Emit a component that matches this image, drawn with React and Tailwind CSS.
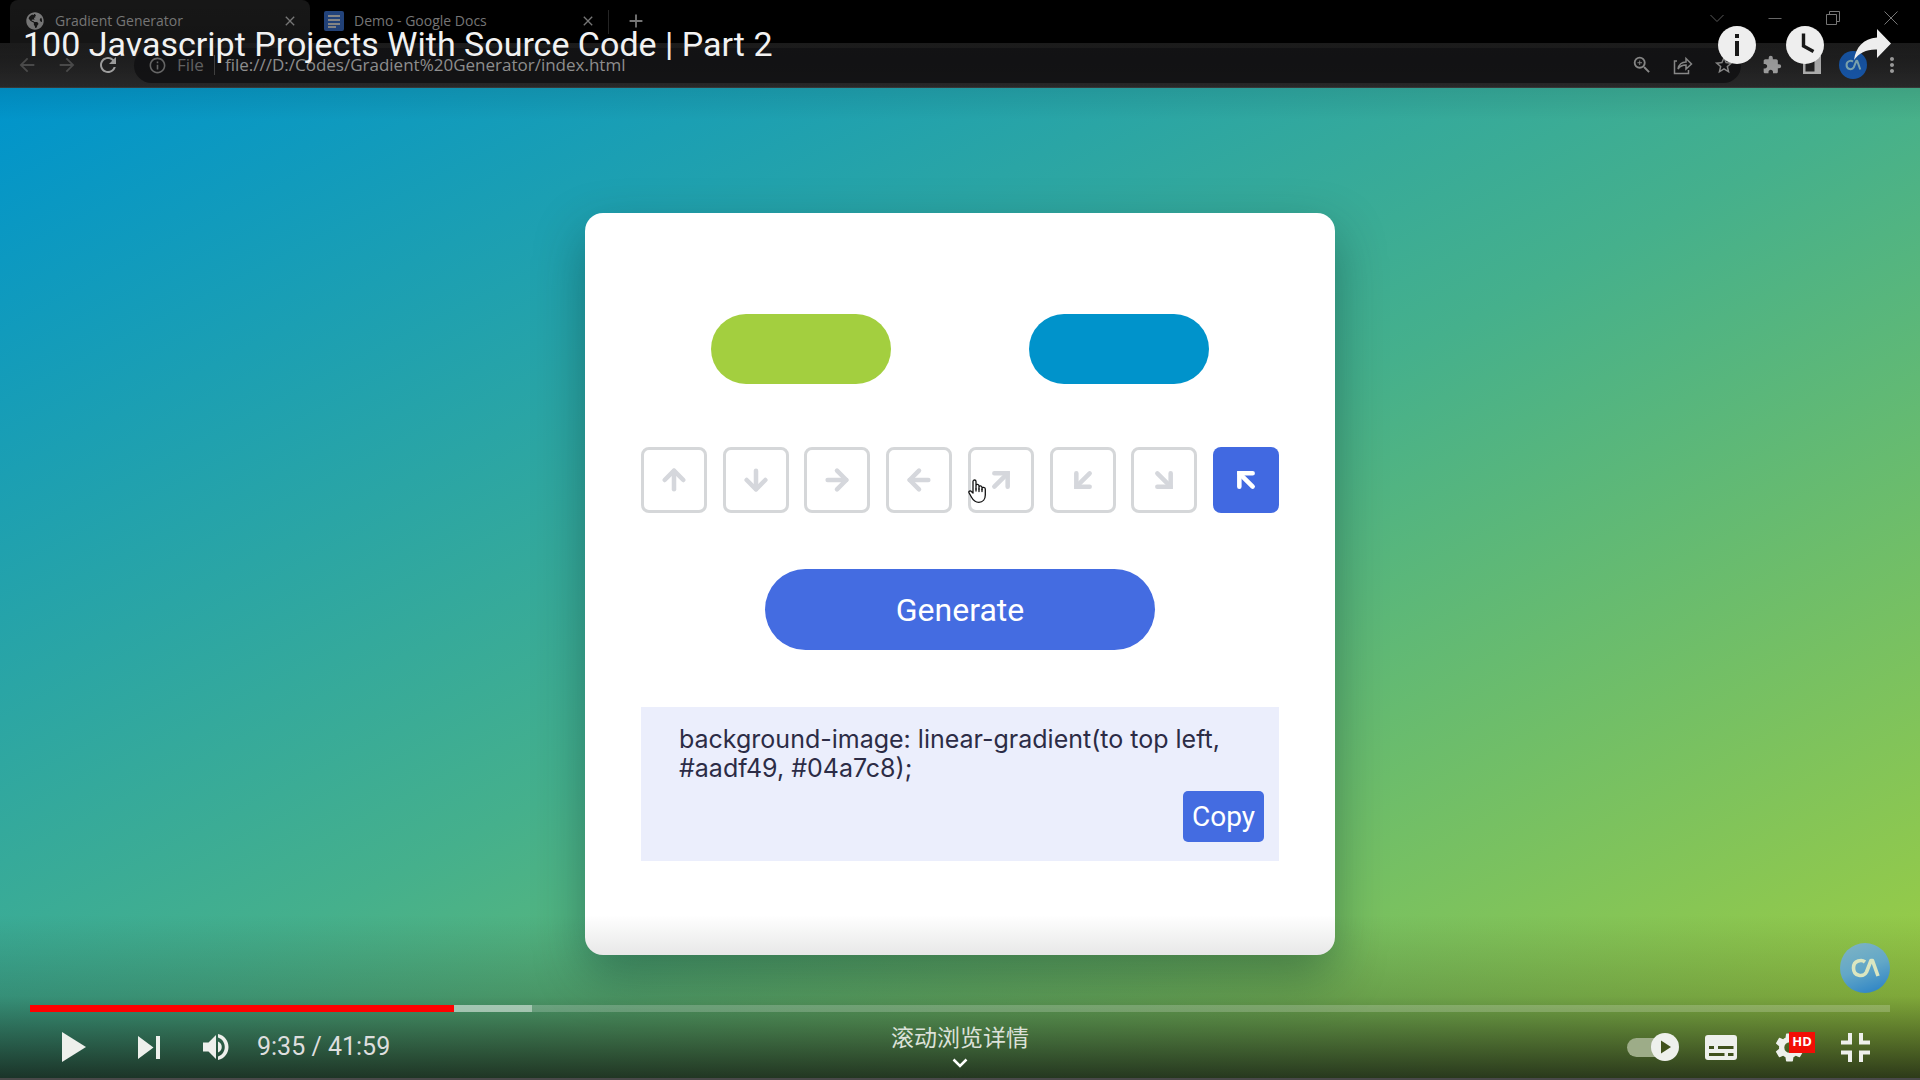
import React from "react";
import { ArrowUp, ArrowDown, ArrowRight, ArrowLeft, ArrowUpRight, ArrowDownLeft, ArrowDownRight, ArrowUpLeft } from "lucide-react";
import { MdClose, MdAdd, MdArrowBack, MdArrowForward, MdRefresh, MdInfoOutline, MdZoomIn, MdStarOutline, MdExtension, MdMoreVert } from "react-icons/md";
import { FaGlobeAmericas } from "react-icons/fa";

const directions = [
  ["to top", ArrowUp], ["to bottom", ArrowDown], ["to right", ArrowRight], ["to left", ArrowLeft],
  ["to top right", ArrowUpRight], ["to bottom left", ArrowDownLeft], ["to bottom right", ArrowDownRight], ["to top left", ArrowUpLeft],
];

function Monogram({ className }) {
  return (
    <svg viewBox="0 0 50 50" className={className} fill="none" stroke="currentColor" strokeWidth="3.6">
      <path d="M25 19C22 16.5 13.500 17 13.500 25c0 8.500 10 9.500 13 4L31 17.500h1.500L38 33" strokeLinejoin="round" />
    </svg>
  );
}

function TabStrip() {
  return (
    <div className="flex h-[43px] bg-black pl-[10px] text-[#7c7c7c]">
      <div className="flex w-[300px] items-center rounded-t-lg bg-[#171717] pl-4 pr-3 pb-0.5">
        <FaGlobeAmericas className="size-[18px]" />
        <span className="ml-[11px] flex-1 text-sm">Gradient Generator</span>
        <button aria-label="Close tab"><MdClose className="size-4" /></button>
      </div>
      <div className="flex w-[298px] items-center pl-3.5 pr-3 pb-0.5">
        <svg viewBox="0 0 20 20" className="size-5"><rect width="20" height="20" rx="2" fill="#23457f" /><path d="M4 5h12M4 9h12M4 13h12M4 16h8" stroke="#8b8b8b" strokeWidth="1.800" /></svg>
        <span className="ml-2.5 flex-1 text-sm">Demo - Google Docs</span>
        <button aria-label="Close tab"><MdClose className="size-4" /></button>
      </div>
      <div className="mt-2.5 h-6 w-px bg-[#262626]" />
      <button aria-label="New tab" className="ml-4 pb-0.5"><MdAdd className="size-[22px]" /></button>
      <div className="mb-2 ml-auto flex items-center gap-[44px] pr-[22px]">
        <svg viewBox="0 0 14 14" className="size-3.5" fill="none" stroke="#5c5c5c"><path d="M.5 4l6.500 6.500L13.500 4" /></svg>
        <svg viewBox="0 0 14 14" className="size-3.5" fill="none" stroke="#6c6c6c"><path d="M.5 7.500h13" /></svg>
        <svg viewBox="0 0 14 14" className="size-3.5" fill="none" stroke="#7c7c7c"><path d="M.5 3.500h10v10h-10zM3.500 3.500v-3h10v10h-3" /></svg>
        <svg viewBox="0 0 14 14" className="size-3.5" fill="none" stroke="#7c7c7c"><path d="M.5.5l13 13M13.500.5l-13 13" /></svg>
      </div>
    </div>
  );
}

function Toolbar() {
  return (
    <div className="flex h-[45px] items-center border-b border-[#3c3c3c] bg-linear-to-b from-[#1e1e1e] to-[#2b2b2c] pl-4 pr-4 text-[#9a9a9a]">
      <MdArrowBack className="size-[22px] text-[#555]" />
      <MdArrowForward className="ml-[18px] size-[22px] text-[#555]" />
      <MdRefresh className="ml-[18px] size-6 text-[#b4b4b4]" />
      <div className="ml-3.5 flex h-[35px] flex-1 items-center rounded-full bg-[#151517] pl-3.5 pr-1.5">
        <MdInfoOutline className="size-[19px] text-[#757575]" />
        <span className="ml-2.5 text-[17px] text-[#707070]">File</span>
        <span className="mx-2.5 h-5 w-px bg-[#484848]" />
        <span className="flex-1 text-[17px] text-[#a3a3a3]">file:///D:/Codes/Gradient%20Generator/index.html</span>
        <MdZoomIn className="size-[22px]" />
        <svg viewBox="0 0 20 20" className="ml-5 size-5" fill="none" stroke="currentColor" strokeWidth="1.500"><path d="M4 6H1.500v12.500h14V15M5 14c1-5 4-7 8-7V3.500l5.500 5.500-5.500 5v-4c-4 0-6 1-8 4z" /></svg>
        <MdStarOutline className="ml-5 size-[22px]" />
      </div>
      <MdExtension className="ml-[21px] size-5 text-[#b0b0b0]" />
      <svg viewBox="0 0 18 18" className="ml-[21px] size-[18px]"><path d="M0 0h18v18H0zM2.500 2.500v13h9v-13z" fill="#c0c0c0" fillRule="evenodd" /></svg>
      <span className="ml-[18px] flex size-7 items-center justify-center rounded-full bg-[#195db5] text-[#8dbac6]"><Monogram className="size-7" /></span>
      <MdMoreVert className="ml-[13px] size-6 text-[#b0b0b0]" />
    </div>
  );
}

function HandCursor() {
  return (
    <svg viewBox="0 0 19 24" className="absolute left-0 top-8 h-6 w-[19px]" fill="#fff" stroke="#111" strokeWidth="1.300" strokeLinejoin="round" strokeLinecap="round">
      <path d="M5 14V2.500C5 .5 8 .5 8 2.500V10 6.500c0-1.500 3-1.500 3 .5v3-2c0-1.500 3-1.500 3 .5v2-1c0-1.500 3.300-1.500 3.300.5v6c0 4-2.300 7.300-6.500 7.300-3.800 0-5.800-2.300-7.300-5L1 13.800c-.8-1.500 1.300-2.600 2.400-1.300z" />
      <path d="M11 10v2.500M14 10.500v2M8 10v2" fill="none" />
    </svg>
  );
}

function GradientCard() {
  return (
    <section className="w-[750px] rounded-[18px] bg-white px-14 pb-[94px] pt-[101px] shadow-[0_20px_50px_rgba(0,40,40,0.38)]">
      <div className="flex justify-between px-[70px]">
        <button aria-label="First color" className="h-[70px] w-[180px] rounded-full bg-[#a3cf3f]" />
        <button aria-label="Second color" className="h-[70px] w-[180px] rounded-full bg-[#0093cb]" />
      </div>
      <div className="mt-[63px] flex justify-between">
        {directions.map(([name, Icon], i) => (
          <div key={name} className="relative">
            <button aria-label={name} className={i === 7 ? "flex size-[66px] items-center justify-center rounded-lg bg-[#4169e1] text-white" : "flex size-[66px] items-center justify-center rounded-lg border-3 border-[#d5d7d9] text-[#d5d7dc]"}>
              <Icon className="size-8" strokeWidth={3.4} strokeLinejoin={i > 3 ? "miter" : "round"} />
            </button>
            {i === 4 && <HandCursor />}
          </div>
        ))}
      </div>
      <button className="mx-auto mt-14 flex h-[81px] w-[390px] items-center justify-center rounded-full bg-[#446ce1] font-[Roboto] text-[32px] text-white">Generate</button>
      <div className="mt-[57px] flex h-[154px] flex-col bg-[#ebeefc] pl-[38px] pr-[15px] pt-[18px] font-[Inter] text-[25px] text-[#2c2c46]">
        <p className="w-[560px] leading-[29px]">background-image: linear-gradient(to top left, #aadf49, #04a7c8);</p>
        <button className="ml-auto mt-2 h-[51px] w-[81px] rounded-[5px] bg-[#446ce1] font-[Roboto] text-[28px] text-white">Copy</button>
      </div>
    </section>
  );
}

function TopOverlay() {
  return (
    <header className="absolute inset-x-0 top-0 flex h-[120px] items-start bg-linear-to-b from-transparent via-black/15 to-transparent pl-[23px] pr-7 text-[#ececec]">
      <h1 className="mt-[25px] flex-1 font-[Roboto] text-[34px] leading-[38px] text-[#f2f2f2]">100 Javascript Projects With Source Code | Part 2</h1>
      <div className="mt-[26px] flex items-start">
        <button aria-label="Info"><svg viewBox="0 0 38 38" className="size-[38px]"><circle cx="19" cy="19" r="19" fill="#eee" /><path d="M17 8h4v4h-4zM17 15h4v15h-4z" fill="#181818" /></svg></button>
        <button aria-label="Watch later" className="ml-[30px]"><svg viewBox="0 0 38 38" className="size-[38px]"><circle cx="19" cy="19" r="19" fill="#eee" /><path d="M17.500 7.500V20l10 5.500" stroke="#181818" strokeWidth="3.400" fill="none" /></svg></button>
        <button aria-label="Share" className="ml-[28px] mt-[3px]"><svg viewBox="0 0 40 32" className="h-8 w-10"><path d="M25 0l14 14.500L25 29v-8.500C15 20 7 24 2 31 4 18 11 10 25 8.500z" fill="#eee" /></svg></button>
      </div>
    </header>
  );
}

function PlayerControls() {
  return (
    <footer className="absolute inset-x-0 bottom-0 border-b-2 border-[#494949] bg-linear-to-b from-transparent via-[#101510]/20 via-50% to-[#101510]/80 px-[30px] pt-[60px]">
      <div className="mb-3 flex justify-end">
        <span className="-mt-[32px] flex size-[50px] items-center justify-center rounded-full bg-linear-160 from-[#7fb4c4] via-[#62a7c7] to-[#217ec5] text-[#dbe6c0]"><Monogram className="size-[50px]" /></span>
      </div>
      <div role="progressbar" aria-label="Seek" aria-valuenow={575} aria-valuemax={2519} className="flex h-[7px] bg-white/20">
        <div className="w-[22.8%] bg-[#ff0000]" />
        <div className="w-[4.200%] bg-white/40" />
      </div>
      <div className="grid h-[66px] grid-cols-3 text-[#eef0ec]">
        <div className="flex items-center pl-8 pt-1">
          <button aria-label="Play"><svg viewBox="0 0 24 30" className="h-[30px] w-6" fill="currentColor"><path d="M0 0l24 15L0 30z" /></svg></button>
          <button aria-label="Next" className="ml-[52px]"><svg viewBox="0 0 22 23" className="h-[23px] w-[22px]" fill="currentColor"><path d="M0 0l15.500 11.500L0 23zM18 0h4v23h-4z" /></svg></button>
          <button aria-label="Mute" className="ml-[43px]"><svg viewBox="0 0 26 26" className="size-[26px]" fill="currentColor"><path d="M0 8.500h5.500L13 1v24l-7.500-7.500H0zM15 7.500c5 2 5 9 0 11zM15 0c14 3 14 23 0 26v-3.500c9-3 9-16 0-19z" /></svg></button>
          <span className="ml-7 font-[Roboto] text-[25px] text-[#dedede]">9:35 / 41:59</span>
        </div>
        <button className="flex flex-col items-center pt-1.5 font-['Noto_Sans_CJK_SC',sans-serif] text-[23px] leading-[36px] text-[#dce1d9]">
          滚动浏览详情
          <svg viewBox="0 0 16 10" className="mt-1 h-2.5 w-4" fill="none" stroke="#fff" strokeWidth="2.500"><path d="M1.500 1.500L8 8l6.500-6.500" /></svg>
        </button>
        <div className="flex items-center justify-end pr-5 pt-1">
          <button aria-label="Autoplay"><svg viewBox="0 0 52 28" className="h-7 w-[52px]"><rect y="5" width="44" height="19" rx="9.500" fill="#9dac88" /><circle cx="38" cy="14" r="14" fill="#eef0ec" /><path d="M34 7.500l10 6.500-10 6.500z" fill="#40511c" /></svg></button>
          <button aria-label="Subtitles" className="ml-[26px]"><svg viewBox="0 0 32 25" className="h-[25px] w-8"><rect width="32" height="25" rx="3" fill="#eef0ec" /><path d="M4 12.500h5M13 12.500h15.500M4 19.500h15.500M23 19.500h5.500" stroke="#40511c" strokeWidth="3" /></svg></button>
          <button aria-label="Settings" className="relative ml-[38px] w-[40px]">
            <svg viewBox="2 2 20 20" className="size-[29px]" fill="currentColor"><path d="M19.140 12.940c.04-.3.060-.61.060-.94s-.02-.64-.07-.94l2.030-1.580a.49.49 0 0 0 .12-.61l-1.920-3.320a.49.49 0 0 0-.59-.22l-2.390.96a7 7 0 0 0-1.620-.94l-.36-2.540A.48.48 0 0 0 13.920 2.400h-3.840a.48.48 0 0 0-.48.410l-.36 2.540a7 7 0 0 0-1.620.94l-2.390-.96a.49.49 0 0 0-.59.22L2.720 8.870a.49.49 0 0 0 .12.610l2.030 1.580c-.05.3-.09.630-.09.940s.02.640.07.940l-2.030 1.580a.49.49 0 0 0-.12.610l1.920 3.320c.12.220.37.290.59.220l2.390-.96c.5.380 1.030.7 1.620.94l.36 2.540c.05.240.24.410.48.410h3.840c.24 0 .44-.17.470-.41l.36-2.540a7 7 0 0 0 1.620-.94l2.390.96c.22.080.47 0 .59-.22l1.920-3.320a.49.49 0 0 0-.12-.61zM12 15.600a3.600 3.600 0 1 1 0-7.200 3.600 3.600 0 0 1 0 7.200z" /></svg>
            <span className="absolute left-[14px] -top-px flex h-[21px] w-[26px] items-center justify-center bg-[#f20d05] font-['Open_Sans'] text-[13px] font-bold text-white">HD</span>
          </button>
          <button aria-label="Exit full screen" className="ml-[26px]"><svg viewBox="0 0 29 29" className="size-[29px]" fill="none" stroke="currentColor" strokeWidth="4"><path d="M9 0v9.500H0M20 0v9.500h9M9 29v-9.500H0M20 29v-9.500h9" /></svg></button>
        </div>
      </div>
    </footer>
  );
}

export default function App() {
  return (
    <main className="relative flex min-h-screen flex-col overflow-hidden font-['Open_Sans',sans-serif]">
      <TabStrip />
      <Toolbar />
      <div className="flex flex-1 items-start justify-center bg-linear-to-tl/srgb from-[#a3cf3d] via-[#45b08c] to-[#0094cc] pb-[125px] pt-[125px]">
        <GradientCard />
      </div>
      <TopOverlay />
      <PlayerControls />
    </main>
  );
}
